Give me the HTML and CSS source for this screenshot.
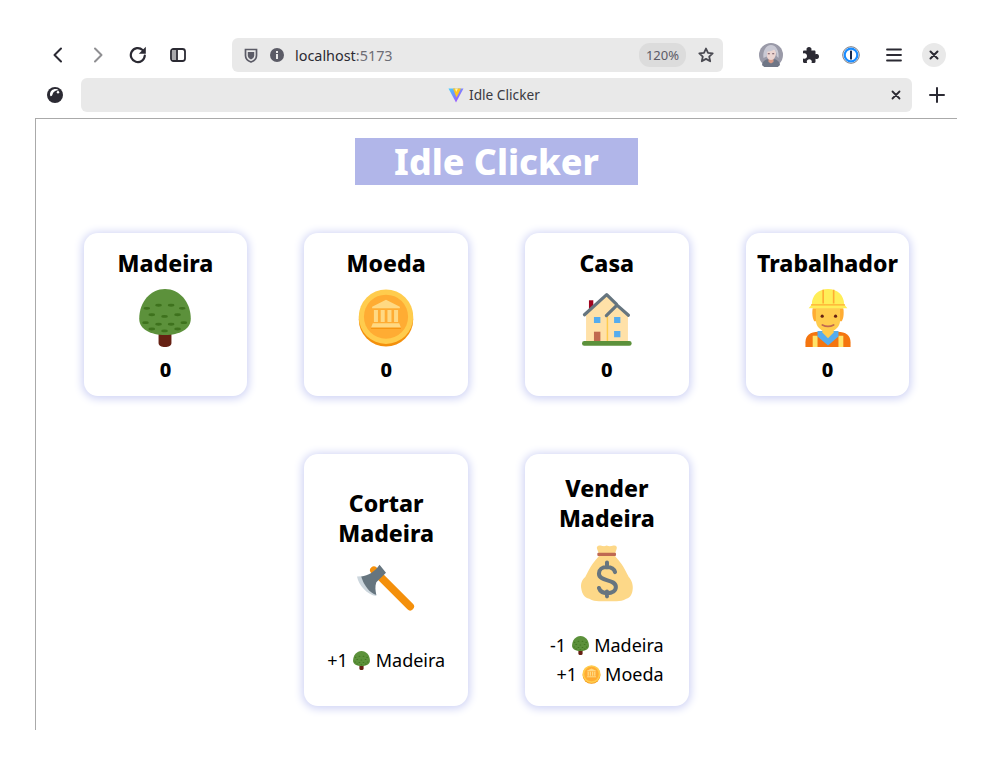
FILE: index.html
```html
<!DOCTYPE html>
<html lang="en">
<head>
  <meta charset="UTF-8">
  <meta name="viewport" content="width=device-width, initial-scale=1.0">
  <title>Idle Clicker</title>
  <link rel="stylesheet" href="styles.css">
</head>
<body>
  <svg class="defs" width="0" height="0" aria-hidden="true">
    <defs>
      <linearGradient id="vite" x1="0" y1="0" x2="1" y2="1">
        <stop offset="0" stop-color="#41d1ff"/>
        <stop offset="1" stop-color="#bd34fe"/>
      </linearGradient>
    </defs>
    <symbol id="tree" viewBox="0 0 36 36">
      <path fill="#662113" d="M14 26h8v7.500c0 1.600-1.800 2.500-4 2.500s-4-.9-4-2.500z"/>
      <path fill="#5c913b" d="M18 0C27 0 34 8 34 18.500 34 25 27 28.600 18 28.600S2 25 2 18.500C2 8 9 0 18 0z"/>
      <g fill="#3e721d">
        <ellipse cx="6.700" cy="12" rx="2" ry=".9"/><ellipse cx="14" cy="10.100" rx="2" ry=".9"/><ellipse cx="21.800" cy="10.100" rx="2" ry=".9"/><ellipse cx="28.700" cy="12" rx="2" ry=".9"/>
        <ellipse cx="9.800" cy="16" rx="2" ry=".9"/><ellipse cx="17.700" cy="17" rx="2" ry=".9"/><ellipse cx="25.800" cy="16" rx="2" ry=".9"/>
        <ellipse cx="5.900" cy="20.900" rx="2" ry=".9"/><ellipse cx="14" cy="21.900" rx="2" ry=".9"/><ellipse cx="21.800" cy="21.900" rx="2" ry=".9"/><ellipse cx="29.700" cy="20.900" rx="2" ry=".9"/>
        <ellipse cx="9.800" cy="24.800" rx="2" ry=".9"/><ellipse cx="17.700" cy="26" rx="2" ry=".9"/><ellipse cx="25.800" cy="24.800" rx="2" ry=".9"/>
      </g>
    </symbol>
    <symbol id="coin" viewBox="0 0 36 36">
      <circle cx="18" cy="18.800" r="16.900" fill="#f4900c"/>
      <circle cx="18" cy="17.200" r="16.900" fill="#ffcc4d"/>
      <circle cx="18" cy="17.200" r="13.700" fill="#ffac33"/>
      <path fill="#ffd983" d="M18 6.600l8.600 4.400v1H9.400v-1zM10.500 13H13v7.500h-2.500zm4.200 0h2.500v7.500h-2.500zm4.200 0h2.500v7.500h-2.500zm4.100 0h2.500v7.500H23zM9.800 21.300h16.400l1.100 2.700H8.700z"/>
      <path fill="#f4900c" d="M8.700 24h18.600v.7H8.700z"/>
    </symbol>
  </svg>

  <div class="toolbar">
    <div class="tool-group">
      <span class="tool">
        <svg width="16" height="16" viewBox="0 0 16 16"><path d="M11 1.500 4.500 8l6.500 6.500" fill="none" stroke="#2b2a33" stroke-width="2" stroke-linecap="round" stroke-linejoin="round"/></svg>
      </span>
      <span class="tool">
        <svg width="16" height="16" viewBox="0 0 16 16"><path d="M5 1.500 11.500 8 5 14.500" fill="none" stroke="#8f8f92" stroke-width="2" stroke-linecap="round" stroke-linejoin="round"/></svg>
      </span>
      <span class="tool">
        <svg width="18" height="18" viewBox="0 0 18 18"><path d="M15.800 9.500A7 7 0 1 1 13.600 4" fill="none" stroke="#2b2a33" stroke-width="2.200" stroke-linecap="round"/><path d="M16.800 .8v7h-7z" fill="#2b2a33"/></svg>
      </span>
      <span class="tool">
        <svg width="16" height="14" viewBox="0 0 16 14"><rect x="1" y="1" width="14" height="12" rx="2.500" fill="none" stroke="#2b2a33" stroke-width="1.800"/><path d="M2 2h4.500v10H2z" fill="#a9a9ac"/><path d="M7 1v12" stroke="#2b2a33" stroke-width="1.800"/></svg>
      </span>
    </div>

    <div class="urlbar">
      <svg class="url-icon" width="14" height="15" viewBox="0 0 14 15"><path d="M1.500 1.500h11v6c0 3.500-2.500 5.500-5.500 6.500-3-1-5.500-3-5.500-6.500z" fill="none" stroke="#5b5b66" stroke-width="1.700"/><path d="M3.800 4h6.400v3.500c0 2-1.500 3.200-3.200 4-1.700-.8-3.200-2-3.200-4z" fill="#5b5b66"/></svg>
      <svg class="url-icon url-info" width="14" height="14" viewBox="0 0 14 14"><circle cx="7" cy="7" r="7" fill="#5b5b66"/><rect x="6" y="6" width="2" height="5" fill="#e9e9e9"/><rect x="6" y="3" width="2" height="2" fill="#e9e9e9"/></svg>
      <span class="url-text"><span class="url-host">localhost</span>:5173</span>
      <span class="zoom-pill">120%</span>
      <svg class="star" width="16" height="16" viewBox="0 0 16 16"><path d="M8 1.500l2 4.400 4.700.5-3.500 3.200 1 4.700L8 11.900l-4.200 2.400 1-4.700L1.300 6.400 6 5.900z" fill="none" stroke="#4a4a52" stroke-width="1.800" stroke-linejoin="round"/></svg>
    </div>

    <div class="tool-group tool-group-right">
      <span class="tool">
        <svg width="24" height="24" viewBox="0 0 24 24">
          <circle cx="12" cy="12" r="12" fill="#9a9aa8"/>
          <path d="M3 22c1-5 4-6 9-6s8 1 9 6a12 12 0 0 1-18 0z" fill="#6f7686"/>
          <path d="M9.500 15h5v4l-2.500 1.500L9.500 19z" fill="#d99a86"/>
          <path d="M7 10c0-3.500 2-5.500 5-5.500s5 2 5 5.500-2 7-5 7-5-3.500-5-7z" fill="#ecd6d2"/>
          <path d="M4.500 15c-1-7 2.500-13 7.500-13s8.500 6 7.500 13L17.500 13c.5-3-1-5.500-2.500-6.500-2 1.500-4.500 2-6.500 2-.7 1.500-.7 3 0 4.500z" fill="#c9c9d4"/>
          <path d="M8.800 10.800h2M13.200 10.800h2" stroke="#6f4f5c" stroke-width="1.100"/>
        </svg>
      </span>
      <span class="tool">
        <svg width="18" height="18" viewBox="0 0 18 18"><path d="M7 1c1.500 0 2.500 1 2.500 2.200 0 .5-.1.800-.2 1.300h3c.8 0 1.200.5 1.200 1.200v2.600c.5-.2 1-.3 1.500-.3C16.200 8 17 9 17 10.500S16.200 13 15 13c-.5 0-1-.1-1.500-.3v3.100c0 .7-.5 1.200-1.200 1.200H9.500c.2-.5.300-1 .3-1.500 0-1.300-1-2.300-2.500-2.300s-2.500 1-2.500 2.300c0 .5.100 1 .3 1.500H2.200C1.500 17 1 16.500 1 15.800v-3.300c.5.200 1 .3 1.500.3C3.800 12.800 5 11.700 5 10S3.800 7.200 2.500 7.200c-.5 0-1 .1-1.500.3V5.700c0-.7.500-1.200 1.200-1.200h2.500c-.1-.5-.2-.8-.2-1.300C4.500 2 5.500 1 7 1z" fill="#2b2a33"/></svg>
      </span>
      <span class="tool">
        <svg width="18" height="18" viewBox="0 0 18 18"><circle cx="9" cy="9" r="8.300" fill="#fff" stroke="#7a7a80" stroke-width="1"/><circle cx="9" cy="9" r="6.300" fill="none" stroke="#1a8cff" stroke-width="2.200"/><rect x="8" y="4.500" width="2" height="9" rx=".6" fill="#1c2b4a"/></svg>
      </span>
      <span class="tool tool-menu">
        <svg width="16" height="14" viewBox="0 0 16 14"><path d="M1 1.500h14M1 7h14M1 12.500h14" stroke="#2b2a33" stroke-width="1.800" stroke-linecap="round"/></svg>
      </span>
      <span class="tool">
        <span class="win-close">
          <svg width="10" height="10" viewBox="0 0 10 10"><path d="M1.500 1.500l7 7M8.500 1.500l-7 7" stroke="#2b2a33" stroke-width="2" stroke-linecap="round"/></svg>
        </span>
      </span>
    </div>
  </div>

  <div class="tabstrip">
    <span class="tab-side">
      <svg width="16" height="16" viewBox="0 0 16 16"><circle cx="8" cy="8" r="8" fill="#2b2a33"/><path d="M3 7.500C3 4.200 5.500 2 8.500 2c1.300 0 2.500.4 3.300 1.200C9 2.800 6 4.500 5.500 7.500 5.100 9 4 9.500 3.500 9 3.200 8.700 3 8.200 3 7.500z" fill="#fff"/><circle cx="11" cy="5.300" r="1.200" fill="#fff"/></svg>
    </span>
    <div class="tab">
      <span class="tab-title">
        <svg width="16" height="16" viewBox="0 0 16 16"><path d="M.5 1.500h15L8 15.500z" fill="url(#vite)"/><path d="M5 1.500h8L8.500 10.500z" fill="#ffc61f"/><path d="M7 1.500h3L8.200 5z" fill="#fff3b0"/></svg>
        <span class="tab-label">Idle Clicker</span>
      </span>
      <svg class="tab-close" width="10" height="10" viewBox="0 0 10 10"><path d="M1.500 1.500l7 7M8.500 1.500l-7 7" stroke="#2b2a33" stroke-width="1.800" stroke-linecap="round"/></svg>
    </div>
    <span class="tab-new">
      <svg width="16" height="16" viewBox="0 0 16 16"><path d="M8 1v14M1 8h14" stroke="#2b2a33" stroke-width="2" stroke-linecap="round"/></svg>
    </span>
  </div>

  <main class="page">
    <h1 class="title">Idle Clicker</h1>

    <section class="grid">
      <div class="card">
        <h2>Madeira</h2>
        <svg class="icon" viewBox="0 0 36 36"><use href="#tree"/></svg>
        <p class="count">0</p>
      </div>
      <div class="card">
        <h2>Moeda</h2>
        <svg class="icon" viewBox="0 0 36 36"><use href="#coin"/></svg>
        <p class="count">0</p>
      </div>
      <div class="card">
        <h2>Casa</h2>
        <svg class="icon" viewBox="0 0 36 36">
          <path fill="#a0041e" d="M6.800 7h2.700v6H6.800z"/>
          <path fill="#ffe1a8" d="M5 16 17.800 4l13.200 12v17H5z"/>
          <path fill="#ffcc4d" d="M17.800 16h.9v17h-.9z"/>
          <path d="M4 16 17.800 3.500 24 9.500M17.600 16.500 24.200 10l7.100 6.300" fill="none" stroke="#66757f" stroke-width="2" stroke-linecap="round" stroke-linejoin="round"/>
          <path fill="#55acee" d="M9.900 17.400h4v3.700h-4zM22.400 17.400h3.900v3.700h-3.900zM22.400 26.100h3.900V30h-3.900z"/>
          <path fill="#c1694f" d="M9.900 26.500h4v6h-4z"/>
          <rect x="2.500" y="32.300" width="30.800" height="2.900" rx="1.400" fill="#5c913b"/>
        </svg>
        <p class="count">0</p>
      </div>
      <div class="card">
        <h2>Trabalhador</h2>
        <svg class="icon" viewBox="0 0 36 36">
          <path fill="#f4750f" d="M4 36v-3c0-4 3-6.500 8-6.500h12c5 0 8 2.500 8 6.500v3z"/>
          <path fill="#ffe46a" d="M8.500 29h3v7h-3zM24.500 29h3v7h-3z"/>
          <path fill="#55acee" d="M11.500 26h13v3.500L18 35l-6.500-5.500z"/>
          <path fill="#ffcc4d" d="M14.500 22h7v5L18 30.500 14.500 27z"/>
          <path fill="#ffac33" d="M8.500 12h19c.5 3 .2 6.500-1 8h-17c-1.200-1.500-1.500-5-1-8z"/>
          <path fill="#ffcc4d" d="M10.500 12h15v7.500c0 4-3.500 7-7.500 7s-7.500-3-7.500-7z"/>
          <circle cx="14.400" cy="16.900" r="1" fill="#662113"/><circle cx="22.700" cy="16.900" r="1" fill="#662113"/>
          <path d="M14.500 22.300c2 1.100 5 1.100 7 0" fill="none" stroke="#c1694f" stroke-width="1.100" stroke-linecap="round"/>
          <path fill="#ffee58" d="M8 9.500C8 4 12 0 18 0s10 4 10 9.500l2 2.500H6z"/>
          <path fill="#ffac33" d="M14.500.5h1v8.500h-1zM21 .5h1v8.500h-1zM7.500 9.500h21v.8h-21z"/>
        </svg>
        <p class="count">0</p>
      </div>

      <div class="card card-action card-cut">
        <h2>Cortar Madeira</h2>
        <svg class="icon" viewBox="0 0 36 36">
          <path d="M10.500 7 33 29.500" fill="none" stroke="#f4900c" stroke-width="4.800" stroke-linecap="round"/>
          <path fill="#ccd6dd" d="M0 10.800C1 16 6 22 12 23v-1C8 21 4 16 2.800 10.700z"/>
          <path fill="#66757f" d="M14 3.500l4 5-6 6c-1 2.500-.5 5.500 0 7.800C8 21.500 4 16 2.600 10.900 7 10 11 8 14 3.500z"/>
        </svg>
        <div class="effects">
          <p>+1 <svg class="mini" viewBox="0 0 36 36"><use href="#tree"/></svg> Madeira</p>
        </div>
      </div>

      <div class="card card-action card-sell">
        <h2>Vender Madeira</h2>
        <svg class="icon" viewBox="0 0 36 36">
          <path fill="#fdd888" d="M13 6l-1.200-3c-.5-1.500.7-2.300 2.200-2 1.500.3 2 .7 3.800 0 1.700.7 2.700.3 4.200 0 1.500-.3 2.500.5 2 2L23 6zM13 7.500C11.500 9.500 10 11 9 12.400 7.500 14.500 6 17.500 4.500 20.500 2.500 22 1.500 25 2 27.500 2.500 31 4 33.500 7 34c2 1.300 4 1.500 6 1.500h11c2 0 4-.2 6-1.500 2.500-.5 3.800-3 4-6.500.2-2.500-1-5.500-2.500-7-1.500-3-3-6-4.500-8.100-1-1.400-2.500-2.900-4-4.900z"/>
          <rect x="12" y="5.400" width="11.600" height="2" rx=".6" fill="#bf6952"/>
          <path fill="none" stroke="#67757f" stroke-width="2.500" stroke-linecap="round" d="M23 17.500c-.6-2-2.500-3.200-5-3.200-3 0-5 1.600-5 4 0 5.500 10.500 3 10.500 8.400 0 2.400-2.400 3.800-5.300 3.800-2.600 0-4.500-1.200-5.200-3.200M18 11.500v3M18 29.500v3"/>
        </svg>
        <div class="effects">
          <p>-1 <svg class="mini" viewBox="0 0 36 36"><use href="#tree"/></svg> Madeira</p>
          <p>+1 <svg class="mini" viewBox="0 0 36 36"><use href="#coin"/></svg> Moeda</p>
        </div>
      </div>
    </section>
  </main>
</body>
</html>
```

FILE: styles.css
```css
body {
  margin: 0;
  background-color: #fff;
  font-family: "Noto Sans", sans-serif;
  color: #000;
  overflow: hidden;
}
.defs {
  position: absolute;
}
.toolbar {
  display: flex;
  align-items: center;
  height: 34px;
  margin-top: 38px;
  padding-left: 38px;
}
.tool-group {
  display: flex;
  align-items: center;
}
.tool-group-right {
  margin-left: 28px;
}
.tool {
  display: flex;
  align-items: center;
  justify-content: center;
  width: 40px;
  height: 34px;
}
.tool-menu {
  margin-left: 3px;
}
.win-close {
  display: flex;
  align-items: center;
  justify-content: center;
  width: 24px;
  height: 24px;
  border-radius: 50%;
  background-color: #e9e9e9;
}
.urlbar {
  display: flex;
  align-items: center;
  width: 491px;
  height: 34px;
  margin-left: 34px;
  padding: 0 9px 0 12px;
  box-sizing: border-box;
  border-radius: 6px;
  background-color: #e9e9e9;
}
.url-info {
  margin-left: 12px;
}
.url-text {
  margin-left: 11px;
  font-size: 14.4px;
  color: #6d6d75;
}
.url-host {
  color: #2b2a33;
}
.zoom-pill {
  margin-left: auto;
  padding: 3px 7px;
  border-radius: 11px;
  background-color: #dcdcdc;
  font-size: 13px;
  color: #5b5b66;
}
.star {
  margin-left: 12px;
}
.tabstrip {
  display: flex;
  align-items: center;
  height: 34px;
  margin-top: 6px;
}
.tab-side {
  display: flex;
  width: 81px;
  padding-left: 47px;
  box-sizing: border-box;
}
.tab {
  display: flex;
  align-items: center;
  width: 831px;
  height: 34px;
  border-radius: 6px;
  background-color: #e9e9e9;
}
.tab-title {
  display: flex;
  align-items: center;
  gap: 5px;
  margin-left: 367px;
  font-size: 13.7px;
  color: #3a3a42;
}
.tab-label {
  margin-top: -2px;
}
.tab-close {
  margin-left: auto;
  margin-right: 11px;
}
.tab-new {
  display: flex;
  margin-left: 17px;
}
.page {
  height: 611px;
  margin: 6px 35px 0;
  border-top: 1px solid #aaa;
  border-left: 1px solid #aaa;
  display: flex;
  flex-direction: column;
  align-items: center;
}
.title {
  margin: 19px 0 48px;
  padding: 0 39.500px;
  background-color: #b1b6e9;
  color: #fff;
  font-size: 35.800px;
  line-height: 47px;
  font-weight: 800;
}
.grid {
  display: grid;
  grid-template-columns: repeat(4, 163.5px);
  column-gap: 57.2px;
  row-gap: 58px;
}
.card {
  display: flex;
  flex-direction: column;
  align-items: center;
  height: 163px;
  padding-top: 15px;
  box-sizing: border-box;
  border-radius: 14px;
  background-color: #fff;
  box-shadow: 0 1px 8px 2px #d0d4f5;
}
.card h2 {
  margin: 0;
  font-size: 23px;
  line-height: 30px;
  font-weight: 800;
  text-align: center;
}
.icon {
  width: 58px;
  height: 58px;
  margin-top: 11px;
}
.count {
  margin: 9px 0 0;
  font-size: 20px;
  line-height: 28px;
  font-weight: 800;
}
.card-action {
  height: 252px;
  padding: 3px 24px 0;
  justify-content: center;
}
.card-cut {
  grid-column: 2;
}
.card-sell {
  grid-column: 3;
  padding-top: 1px;
}
.effects {
  margin-top: 29px;
  font-size: 18px;
  line-height: 29px;
  white-space: nowrap;
}
.effects p {
  margin: 0;
  display: flex;
  align-items: center;
  justify-content: flex-end;
  gap: 4.500px;
}
.mini {
  width: 19px;
  height: 19px;
}
```
